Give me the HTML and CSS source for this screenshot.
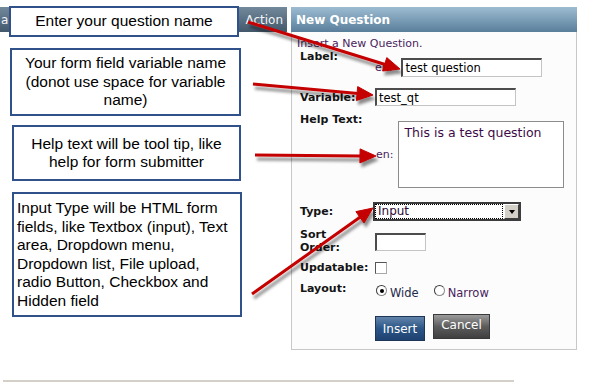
FILE: index.html
```html
<!DOCTYPE html>
<html lang="en">
<head>
    <meta charset="UTF-8">
    <title>New Question</title>
    <link rel="stylesheet" href="styles.css">
</head>
<body>
    <div class="page">
        <div class="screen">
            <!-- Grid behind the callouts -->
            <div class="grid">
                <div class="grid-head"><span>a</span><span>Action</span></div>
            </div>

            <!-- New Question panel -->
            <div class="panel">
                <div class="panel-head">New Question</div>
                <div class="panel-body">
                    <p class="intro">Insert a New Question.</p>

                    <div class="row row-label">
                        <div class="label">Label:</div>
                        <div class="value"><span class="lang">en:</span><input class="field" type="text" value="test question"></div>
                    </div>

                    <div class="row row-variable">
                        <div class="label">Variable:</div>
                        <div class="value"><input class="field" type="text" value="test_qt"></div>
                    </div>

                    <div class="row row-help">
                        <div class="label">Help Text:</div>
                        <div class="value"><span class="lang">en:</span><textarea class="area">This is a test question</textarea></div>
                    </div>

                    <div class="row row-type">
                        <div class="label">Type:</div>
                        <div class="value">
                            <div class="select"><span class="select-value">Input</span><span class="select-btn"></span></div>
                        </div>
                    </div>

                    <div class="row row-sort">
                        <div class="label">Sort<br>Order:</div>
                        <div class="value"><input class="field" type="text" value=""></div>
                    </div>

                    <div class="row row-update">
                        <div class="label">Updatable:</div>
                        <div class="value"><span class="check"></span></div>
                    </div>

                    <div class="row row-layout">
                        <div class="label">Layout:</div>
                        <div class="value">
                            <span class="option"><span class="radio on"></span><span class="option-text">Wide</span></span>
                            <span class="option option-narrow"><span class="radio"></span><span class="option-text">Narrow</span></span>
                        </div>
                    </div>

                    <div class="actions">
                        <button class="btn btn-insert">Insert</button>
                        <button class="btn btn-cancel">Cancel</button>
                    </div>
                </div>
            </div>
        </div>

        <div class="rule"></div>

        <!-- Callouts laid over the screenshot -->
        <div class="notes">
            <div class="note note-1">Enter your question name</div>
            <div class="note note-2">Your form field variable name<br>(donot use space for variable<br>name)</div>
            <div class="note note-3">Help text will be tool tip, like<br>help for form submitter</div>
            <div class="note note-4">Input Type will be HTML form<br>fields, like Textbox (input), Text<br>area, Dropdown menu,<br>Dropdown list, File upload,<br>radio Button, Checkbox and<br>Hidden field</div>
        </div>

        <svg class="arrows" width="592" height="392" viewBox="0 0 592 392">
            <defs>
                <filter id="shade" filterUnits="userSpaceOnUse" x="0" y="0" width="592" height="392">
                    <feDropShadow dx="2" dy="4" stdDeviation="1.8" flood-color="#000" flood-opacity="0.45"/>
                </filter>
            </defs>
            <g filter="url(#shade)" fill="#c40000" stroke="#c40000">
                <line x1="248" y1="22" x2="386" y2="64.7" stroke-width="3"/>
                <polygon points="400,69 382.6,71 386.8,57.6" stroke-width="1"/>

                <line x1="253" y1="84" x2="358" y2="93.6" stroke-width="3"/>
                <polygon points="373,95 356.4,100.5 357.7,86.6" stroke-width="1"/>

                <line x1="255" y1="155" x2="361" y2="155.9" stroke-width="3"/>
                <polygon points="376,156 359.9,162.9 360.1,148.9" stroke-width="1"/>

                <line x1="252" y1="294" x2="361" y2="216.5" stroke-width="3"/>
                <polygon points="373,208 364,223 355.9,211.6" stroke-width="1"/>
            </g>
        </svg>
    </div>
</body>
</html>
```

FILE: styles.css
```css
/* Reset */
* {
    margin: 0;
    padding: 0;
    box-sizing: border-box;
}

body {
    font-family: "DejaVu Sans", Verdana, sans-serif;
    background-color: #fff;
    color: #141414;
    width: 592px;
    height: 392px;
    overflow: hidden;
}

.page {
    position: relative;
    height: 392px;
    padding-top: 7px;
}

.screen {
    display: flex;
    gap: 4px;
}

/* Grid header on the left */
.grid {
    width: 287px;
}

    .grid-head {
        height: 25px;
        display: flex;
        justify-content: space-between;
        align-items: center;
        padding: 0 4px 0 1px;
        background: linear-gradient(#72899b, #43586b);
        color: #f2f5f8;
        font-size: 12px;
    }

/* Panel */
.panel {
    width: 286px;
}

    .panel-head {
        height: 25px;
        display: flex;
        align-items: center;
        padding-left: 5px;
        background: linear-gradient(#9dbcd2, #5a7f9b);
        color: #fff;
        font-size: 12px;
        font-weight: bold;
    }

    .panel-body {
        border: 1px solid #c8c8c8;
        border-top: 0;
        background-color: #fcfcfc;
        padding: 6px 0 8px 5px;
    }

.intro {
    font-size: 11px;
    line-height: 12px;
    color: #4a1d5c;
}

/* Form rows */
.row {
    display: flex;
    align-items: flex-start;
    padding-left: 3px;
}

    .row .label {
        width: 75px;
        flex: none;
        font-size: 11px;
        line-height: 13px;
        font-weight: bold;
        color: #141414;
    }

    .row .value {
        display: flex;
        align-items: center;
    }

.lang {
    font-size: 11px;
    color: #4a1d5c;
}

.field {
    font-family: inherit;
    font-size: 11.5px;
    color: #000;
    padding: 0 2px;
    background-color: #fff;
    border: 1px solid #c4c4c4;
    border-top: 2px solid #4c4c4c;
    border-left: 2px solid #4c4c4c;
    outline: none;
}

.row-label .value {
    padding-top: 8px;
    gap: 9px;
}

    .row-label .field {
        width: 141px;
        height: 19px;
    }

.row-variable {
    margin-top: 11px;
}

    .row-variable .label {
        padding-top: 3px;
    }

    .row-variable .field {
        width: 141px;
        height: 18px;
    }

.row-help {
    margin-top: 7px;
}

    .row-help .value {
        padding-top: 8px;
        margin-left: 1px;
        gap: 5px;
    }

.area {
    width: 166px;
    height: 67px;
    font-family: inherit;
    font-size: 12.5px;
    line-height: 16px;
    color: #3d0a47;
    padding: 3px 5px;
    border: 1px solid #8c8c8c;
    background-color: #fff;
    resize: none;
    overflow: hidden;
}

.row-type {
    margin-top: 14px;
}

    .row-type .label {
        padding-top: 3px;
    }

.select {
    display: flex;
    width: 148px;
    height: 19px;
    margin-left: -2px;
    border: 2px solid #3c3c3c;
    background-color: #fff;
}

.select-value {
    flex: 1;
    margin: 0 1px 0 0;
    border: 1px dotted #000;
    padding-left: 2px;
    font-size: 12px;
    line-height: 13px;
    color: #2b0a3a;
}

.select-btn {
    width: 15px;
    display: flex;
    align-items: center;
    justify-content: center;
    background-color: #d4d0c8;
    border: 1px solid;
    border-color: #fff #404040 #404040 #fff;
}

    .select-btn::after {
        content: "";
        border-left: 3.5px solid transparent;
        border-right: 3.5px solid transparent;
        border-top: 4px solid #000;
    }

.row-sort {
    margin-top: 7px;
}

    .row-sort .value {
        padding-top: 5px;
    }

    .row-sort .field {
        width: 51px;
        height: 18px;
    }

.row-update {
    margin-top: 7px;
}

.check {
    width: 12px;
    height: 12px;
    margin-top: 1px;
    background-color: #fff;
    border: 1px solid #555;
    border-right-color: #a8a8a8;
    border-bottom-color: #a8a8a8;
}

.row-layout {
    margin-top: 8px;
}

    .row-layout .value {
        align-items: flex-start;
        padding-top: 3px;
    }

.option {
    display: flex;
    align-items: flex-start;
    gap: 3px;
    margin-left: 1px;
}

.option-narrow {
    margin-left: 15px;
}

.radio {
    width: 11px;
    height: 11px;
    display: grid;
    place-items: center;
    border-radius: 50%;
    background-color: #fff;
    border: 1px solid #8a8a8a;
    border-top-color: #3c3c3c;
    border-left-color: #3c3c3c;
}

    .radio.on::after {
        content: "";
        width: 4px;
        height: 4px;
        border-radius: 50%;
        background-color: #000;
    }

.option-text {
    font-size: 11.5px;
    line-height: 13px;
    padding-top: 2px;
    color: #1d2a4a;
}

.option-narrow .option-text {
    color: #4a1d5c;
}

/* Buttons */
.actions {
    display: flex;
    align-items: flex-start;
    gap: 8px;
    margin-top: 14px;
    padding-left: 78px;
}

.btn {
    height: 25px;
    padding: 0;
    font-family: inherit;
    font-size: 12px;
    color: #fff;
    border: 1px solid;
}

.btn-insert {
    width: 50px;
    margin-top: 2px;
    background: linear-gradient(#6284ab, #2b5585 50%, #1e4272);
    border-color: #1d3557;
}

.btn-cancel {
    width: 57px;
    padding-bottom: 4px;
    background: linear-gradient(#9c9c9c, #5c5c5c 50%, #404040);
    border-color: #3a3a3a;
}

.rule {
    width: 511px;
    height: 2px;
    margin: 30px 0 0 3px;
    background-color: #d4d0c8;
}

/* Callouts */
.notes {
    position: absolute;
    top: 6px;
    left: 0;
    display: flex;
    flex-direction: column;
    font-family: "Liberation Sans", Arial, sans-serif;
    font-size: 15.5px;
    line-height: 18.5px;
    color: #000;
}

.note {
    width: 230px;
    display: flex;
    align-items: center;
    justify-content: center;
    text-align: center;
    background-color: #fff;
    border: 2px solid #30518a;
}

.note-1 {
    height: 31px;
    margin-left: 9px;
}

.note-2 {
    width: 231px;
    height: 68px;
    margin: 11px 0 0 10px;
}

.note-3 {
    width: 229px;
    height: 56px;
    margin: 9px 0 0 12px;
}

.note-4 {
    height: 125px;
    margin: 11px 0 0 12px;
    display: block;
    text-align: left;
    padding: 5px 3px;
}

/* Arrows */
.arrows {
    position: absolute;
    top: 0;
    left: 0;
    pointer-events: none;
}
```
